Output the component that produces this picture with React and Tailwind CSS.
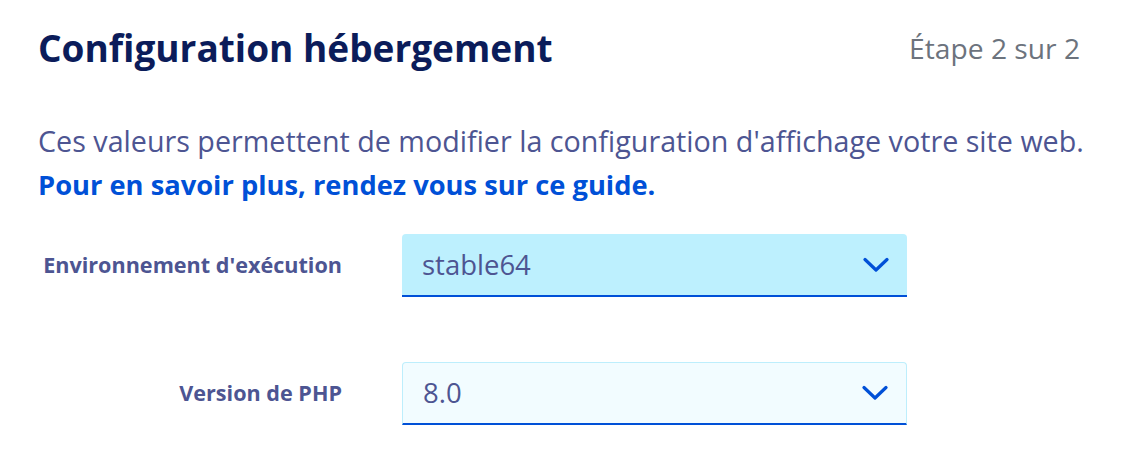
const font = { fontFamily: "'Open Sans', 'Noto Sans', sans-serif" };

function Select({ value, active }) {
  return (
    <div
      className={
        "flex h-[63px] w-[505px] items-center justify-between rounded-t-[4px] border-b-2 border-b-[#0050d7] pl-[20px] pr-[18px] " +
        (active
          ? "bg-[#bdf0fe]"
          : "border-x border-t border-x-[#bdeefc] border-t-[#bdeefc] bg-[#f2fcff]")
      }
    >
      <span className="text-[27.5px] leading-[36px] text-[#4d5592]">{value}</span>
      <svg className="h-[16px] w-[26px]" viewBox="0 0 26 16" fill="none" stroke="#0050d7" strokeWidth="3.2" strokeLinecap="round" strokeLinejoin="round">
        <path d="M2 2.5 L13 13 L24 2.5" />
      </svg>
    </div>
  );
}

export default function App() {
  return (
    <div className="h-[476px] w-[1136px] bg-white pl-[38px] pr-[52px]" style={font}>
      {/* Header */}
      <div className="flex items-center justify-between pt-[22px]">
        <h1 className="text-[37px] font-bold leading-[51px] text-[#0b1c5a]">Configuration hébergement</h1>
        <span className="mr-[4px] text-[28.2px] leading-[40px] text-[#6c737d]">Étape 2 sur 2</span>
      </div>

      {/* Intro */}
      <p className="mt-[50px] text-[28.7px] leading-[36px] text-[#4d5592]">
        Ces valeurs permettent de modifier la configuration d'affichage votre site web.
      </p>
      <a className="mt-[8px] block text-[27.3px] font-bold leading-[36px] text-[#0050d7]">
        Pour en savoir plus, rendez vous sur ce guide.
      </a>

      {/* Form */}
      <div className="mt-[31px] grid grid-cols-[304px_505px] items-center gap-x-[60px] gap-y-[65px]">
        <label className="text-right text-[21.6px] font-bold text-[#4d5592]">Environnement d'exécution</label>
        <Select value="stable64" active />
        <label className="text-right text-[21.6px] font-bold text-[#4d5592]">Version de PHP</label>
        <Select value="8.0" />
      </div>
    </div>
  );
}
